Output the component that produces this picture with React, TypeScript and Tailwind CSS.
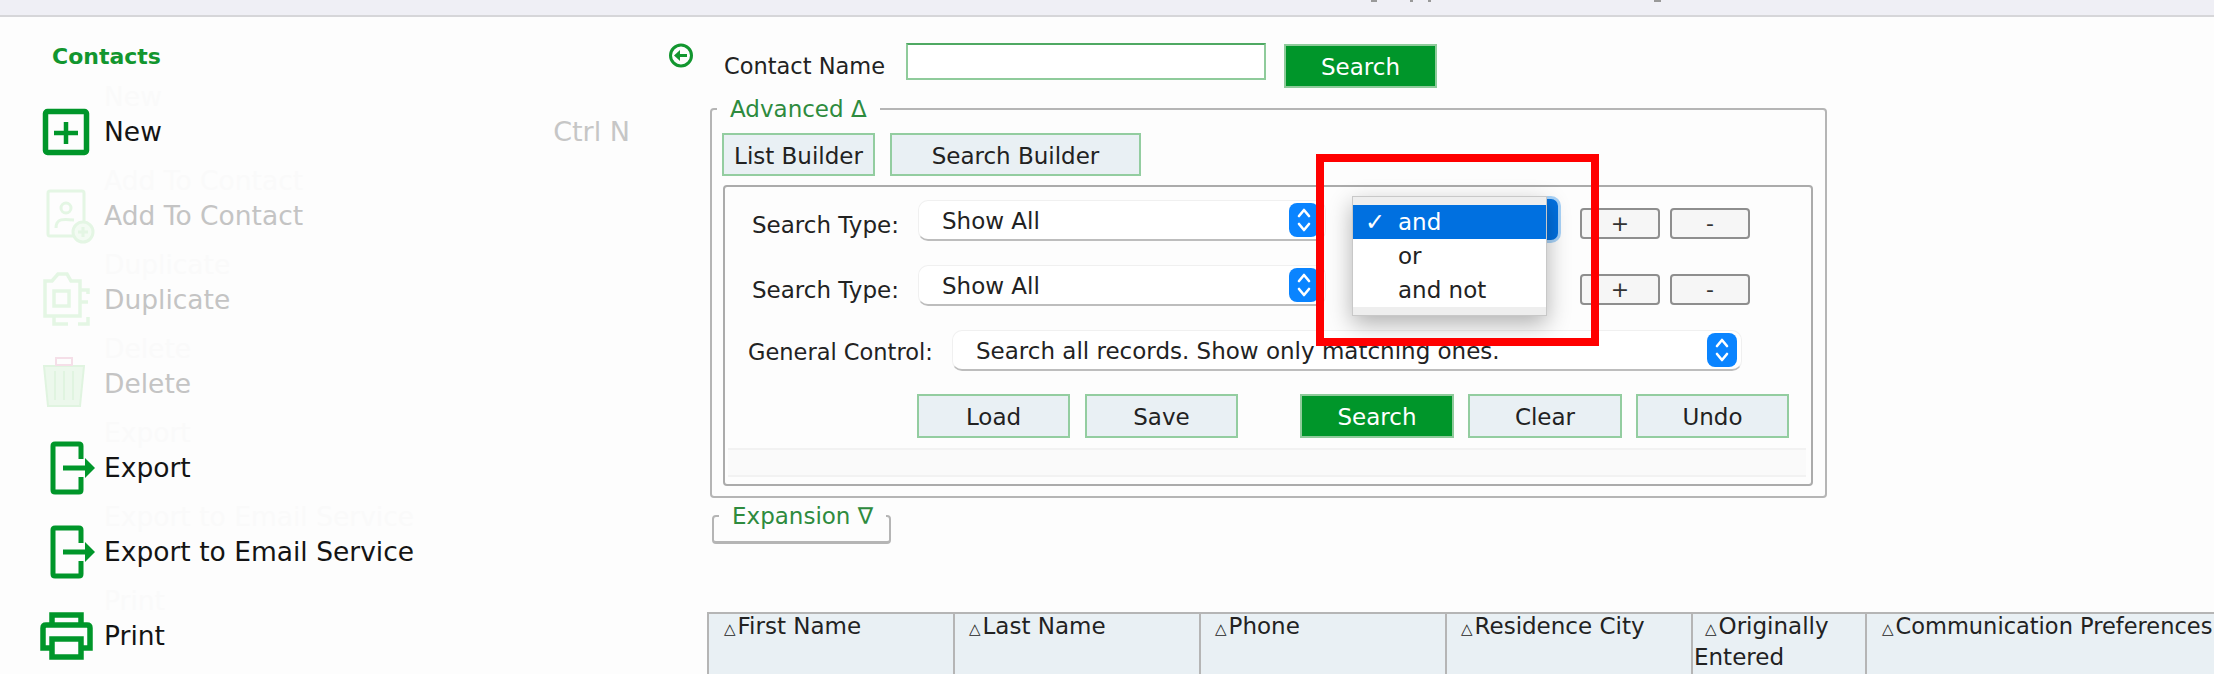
import React from "react";

const font = { fontFamily: '"DejaVu Sans", "Liberation Sans", sans-serif' };

const Stepper = () => (
  <div className="flex h-[34px] w-[30px] items-center justify-center rounded-lg bg-[#0a84ff]">
    <svg width="18" height="28" viewBox="0 0 18 28" fill="none" stroke="white" strokeWidth="2.6" strokeLinecap="round" strokeLinejoin="round">
      <path d="M4 10 L9 4 L14 10" />
      <path d="M4 18 L9 24 L14 18" />
    </svg>
  </div>
);

const NewIcon = () => (
  <svg width="60" height="60" viewBox="0 0 60 60" fill="none" stroke="#00962a">
    <rect x="7.5" y="9.5" width="41" height="41" rx="2" strokeWidth="5.5" />
    <path d="M28 20 V42 M16 31 H40" strokeWidth="4.5" />
  </svg>
);

const AddContactIcon = () => (
  <svg width="60" height="60" viewBox="0 0 60 60" fill="none" stroke="#e4f6e4" strokeWidth="3">
    <rect x="10" y="5" width="36" height="45" rx="2" />
    <circle cx="28" cy="22" r="5" />
    <path d="M18 42 C18 32 26 33 36 34" />
    <circle cx="45" cy="46" r="10" fill="#f3fbf3" />
    <path d="M45 41 V51 M40 46 H50" />
  </svg>
);

const DuplicateIcon = () => (
  <svg width="60" height="60" viewBox="0 0 60 60" fill="none" stroke="#e4f6e4" strokeWidth="3.5">
    <path d="M14 11 H7 V46 H42 V11 H33 L29 4 H20 Z" />
    <rect x="16" y="21" width="15" height="15" />
    <path d="M16 47 V54 H30 M40 54 H50 V47 M42 20 H50 V24 M42 32 H50" />
  </svg>
);

const DeleteIcon = () => (
  <svg width="60" height="60" viewBox="0 0 60 60" fill="#ecf8ec" stroke="#e0f4e0" strokeWidth="2">
    <path d="M6 12 H46 L42 52 H10 Z" />
    <path d="M18 4 H34 V11 H18 Z" fill="none" stroke="#f5dfe8" />
    <path d="M17 17 V46 M26 17 V46 M35 17 V46" />
  </svg>
);

const ExportIcon = () => (
  <svg width="60" height="60" viewBox="0 0 60 60" fill="none" stroke="#00962a" strokeWidth="5">
    <path d="M43 21 V8 Q43 6 41 6 H17 Q15 6 15 8 V52 Q15 54 17 54 H41 Q43 54 43 52 V39" />
    <path d="M25 30 H48" />
    <path d="M47 20 L57 30 L47 40 Z" fill="#00962a" stroke="none" />
  </svg>
);

const PrintIcon = () => (
  <svg width="60" height="60" viewBox="0 0 60 60" fill="none" stroke="#00962a" strokeWidth="5.5">
    <path d="M14 18 V9 H43 V18" />
    <path d="M13 42 H5 V22 Q5 19 8 19 H49 Q52 19 52 22 V42 H44" />
    <rect x="14" y="33" width="29" height="18" fill="#fdfdfd" />
    <circle cx="45" cy="25" r="1.6" fill="#fdfdfd" stroke="none" />
  </svg>
);

const menuItems = [
  { label: "New", icon: <NewIcon />, off: false, shortcut: "Ctrl N" },
  { label: "Add To Contact", icon: <AddContactIcon />, off: true },
  { label: "Duplicate", icon: <DuplicateIcon />, off: true },
  { label: "Delete", icon: <DeleteIcon />, off: true },
  { label: "Export", icon: <ExportIcon />, off: false },
  { label: "Export to Email Service", icon: <ExportIcon />, off: false },
  { label: "Print", icon: <PrintIcon />, off: false },
];

const LightButton = ({ label, width }: { label: string; width: string }) => (
  <button className={`flex items-center justify-center border-2 border-[#93cda0] bg-[#e9f0f4] pt-[3px] text-[23px] text-[#222] ${width}`}>
    {label}
  </button>
);

const SmallButton = ({ label }: { label: string }) => (
  <button className="flex h-[31px] w-[80px] items-center justify-center rounded border-2 border-[#8e8e8e] bg-[#f6f6f6] text-[22px] text-[#333]">
    {label}
  </button>
);

const SearchTypeRow = () => (
  <div className="flex h-[41px] w-[408px] items-center justify-between rounded-[10px] border border-[#f0f0f0] border-b-2 border-b-[#bdbdbd] bg-white pr-[6px] pl-[23px] text-[23px] text-[#222]">
    <span className="pt-[3px]">Show All</span>
    <Stepper />
  </div>
);

const columns = [
  { label: "First Name", pad: "pl-[15px]" },
  { label: "Last Name", pad: "pl-[14px]" },
  { label: "Phone", pad: "pl-[14px]" },
  { label: "Residence City", pad: "pl-[14px]" },
  { label: "Originally", second: "Entered", pad: "pl-[1px]", indent: "pl-[11px]" },
  { label: "Communication Preferences", pad: "pl-[15px] text-[22.5px]" },
];

export default function App() {
  return (
    <div className="h-[674px] w-[2214px] overflow-hidden bg-[#fdfdfd]" style={font}>
      {/* top bar, only the bottom of the title shows */}
      <div className="flex h-[17px] items-start border-b-2 border-[#d6d6d9] bg-[#efeff5] pl-[1371px]">
        <div className="h-[2px] w-[6px] bg-[#999]" />
        <div className="ml-[33px] h-[2px] w-[3px] bg-[#999]" />
        <div className="ml-[15px] h-[2px] w-[3px] bg-[#999]" />
        <div className="ml-[223px] h-[2px] w-[7px] bg-[#999]" />
      </div>

      <div className="flex">
        {/* sidebar */}
        <aside className="w-[667px] shrink-0">
          <div className="flex h-[73px] items-center pt-[6px] pl-[52px] text-[22px] font-bold text-[#12962f]">Contacts</div>
          {menuItems.map((item) => (
            <div key={item.label} className="flex h-[84px] items-center pl-[38px]">
              <div className="w-[66px] shrink-0">{item.icon}</div>
              <div className={`relative text-[26.5px] ${item.off ? "text-[#c4c4c4]" : "text-[#141414]"}`}>
                <span className="absolute top-[-35px] left-0 whitespace-nowrap text-[#fafafa]">{item.label}</span>
                {item.label}
              </div>
              {item.shortcut && <div className="ml-auto pr-[37px] text-[27px] text-[#c6c6c6]">{item.shortcut}</div>}
            </div>
          ))}
        </aside>

        {/* main */}
        <main className="min-w-0 flex-1 pt-[26px]">
          <div className="flex items-start">
            <svg className="mt-[-1px] ml-[1px]" width="26" height="27" viewBox="0 0 26 27" fill="none" stroke="#12962f" strokeWidth="3">
              <circle cx="13" cy="13.5" r="10.5" />
              <path d="M19 13.5 H11" />
              <path d="M12 8 L6 13.5 L12 19 Z" fill="#12962f" stroke="none" />
            </svg>
            <span className="ml-[30px] w-[160px] pt-[5px] text-[22.5px] leading-[37px] whitespace-nowrap text-[#222]">Contact Name</span>
            <input className="ml-[22px] h-[37px] w-[360px] border-2 border-[#8fcb9b] border-t-[#4fa963] bg-white" />
            <button className="mt-[1px] ml-[18px] h-[44px] w-[153px] border-2 border-[#8fcb9b] bg-[#00962a] pt-[3px] text-[23px] text-white">Search</button>
          </div>

          {/* advanced */}
          <fieldset className="mt-[5px] ml-[43px] w-[1117px] rounded-sm border-2 border-[#b5b5b5] px-[10px] pt-[8px] pb-[10px]">
            <legend className="ml-[-5px] px-[13px] text-[23px] leading-[32px] text-[#2e8b3e]">Advanced Δ</legend>
            <div className="flex gap-[15px]">
              <LightButton label="List Builder" width="h-[43px] w-[153px]" />
              <LightButton label="Search Builder" width="h-[43px] w-[251px]" />
            </div>

            <div className="relative mt-[9px] ml-[1px] h-[301px] w-[1090px] rounded-sm border-2 border-[#ababab] pt-[13px]">
              <div className="flex h-[41px] items-start pl-[27px]">
                <span className="w-[166px] pt-[8px] text-[23px] text-[#222]">Search Type:</span>
                <SearchTypeRow />
                <div className="ml-[254px] flex gap-[10px] pt-[8px]">
                  <SmallButton label="+" />
                  <SmallButton label="-" />
                </div>
              </div>
              <div className="mt-[24px] flex h-[42px] items-start pl-[27px]">
                <span className="w-[166px] pt-[8px] text-[23px] text-[#222]">Search Type:</span>
                <SearchTypeRow />
                <div className="ml-[254px] flex gap-[10px] pt-[9px]">
                  <SmallButton label="+" />
                  <SmallButton label="-" />
                </div>
              </div>
              <div className="mt-[23px] flex h-[41px] items-start pl-[23px]">
                <span className="w-[204px] pt-[6px] text-[22.5px] whitespace-nowrap text-[#222]">General Control:</span>
                <div className="flex h-[41px] w-[790px] items-center justify-between rounded-[10px] border border-[#f0f0f0] border-b-2 border-b-[#bdbdbd] bg-white pr-[4px] pl-[23px] text-[23px] text-[#222]">
                  <span className="pt-[2px]">Search all records. Show only matching ones.</span>
                  <Stepper />
                </div>
              </div>

              <div className="mt-[23px] flex h-[44px] pl-[192px]">
                <LightButton label="Load" width="w-[153px]" />
                <div className="ml-[15px] flex">
                  <LightButton label="Save" width="w-[153px]" />
                </div>
                <button className="ml-[62px] w-[154px] border-2 border-[#8fcb9b] bg-[#00962a] pt-[3px] text-[23px] text-white">Search</button>
                <div className="ml-[14px] flex gap-[14px]">
                  <LightButton label="Clear" width="w-[154px]" />
                  <LightButton label="Undo" width="w-[153px]" />
                </div>
              </div>

              <div className="mt-[10px] ml-[3px] h-[29px] w-[1078px] border-y-2 border-[#f2f2f2] bg-[#fafafa]" />

              {/* open dropdown */}
              <div className="absolute top-[9px] left-[627px] z-10 h-[47px] w-[209px] rounded-[10px] border-[3px] border-[#a9d3f8] bg-[#0070e0]" />
              <div className="absolute top-[9px] left-[627px] z-20 w-[195px] border border-[#c8c8c8] bg-white text-[23px] text-[#222] shadow-[0_8px_22px_rgba(0,0,0,0.3)]">
                <div className="h-[8px] bg-[#eeeeee]" />
                <div className="flex h-[34px] items-center bg-[#0070e0] text-white">
                  <span className="w-[45px] pl-[12px] text-[24px]">✓</span>and
                </div>
                <div className="flex h-[34px] items-center pl-[45px]">or</div>
                <div className="flex h-[34px] items-center pl-[45px]">and not</div>
                <div className="h-[8px] bg-[#eeeeee]" />
              </div>

              {/* red callout */}
              <div className="absolute top-[-33px] left-[591px] z-30 h-[192px] w-[283px] border-[8px] border-[#ff0000]" />
            </div>
          </fieldset>

          {/* expansion */}
          <fieldset className="mt-[3px] ml-[45px] h-[43px] w-[179px] rounded-sm border-2 border-[#b5b5b5] border-b-[3px]">
            <legend className="ml-[5px] px-[13px] text-[23px] leading-[30px] text-[#2e8b3e]">Expansion ∇</legend>
          </fieldset>

          {/* table header */}
          <div className="mt-[68px] ml-[40px] grid h-[80px] w-[1520px] grid-cols-[246px_246px_246px_246px_174px_362px] border-t-2 border-l-2 border-[#b5b5b5] bg-[#e9f0f4] text-[23px] leading-[30px] text-[#222]">
            {columns.map((col) => (
              <div key={col.label} className={`border-r-2 border-[#b5b5b5] whitespace-nowrap ${col.pad}`}>
                <div className={`mt-[-3px] ${col.indent ?? ""}`}>
                  <span className="mr-[2px] text-[15px]">△</span>
                  {col.label}
                </div>
                {col.second && <div className="mt-[-2px]">{col.second}</div>}
              </div>
            ))}
          </div>
        </main>
      </div>
    </div>
  );
}
